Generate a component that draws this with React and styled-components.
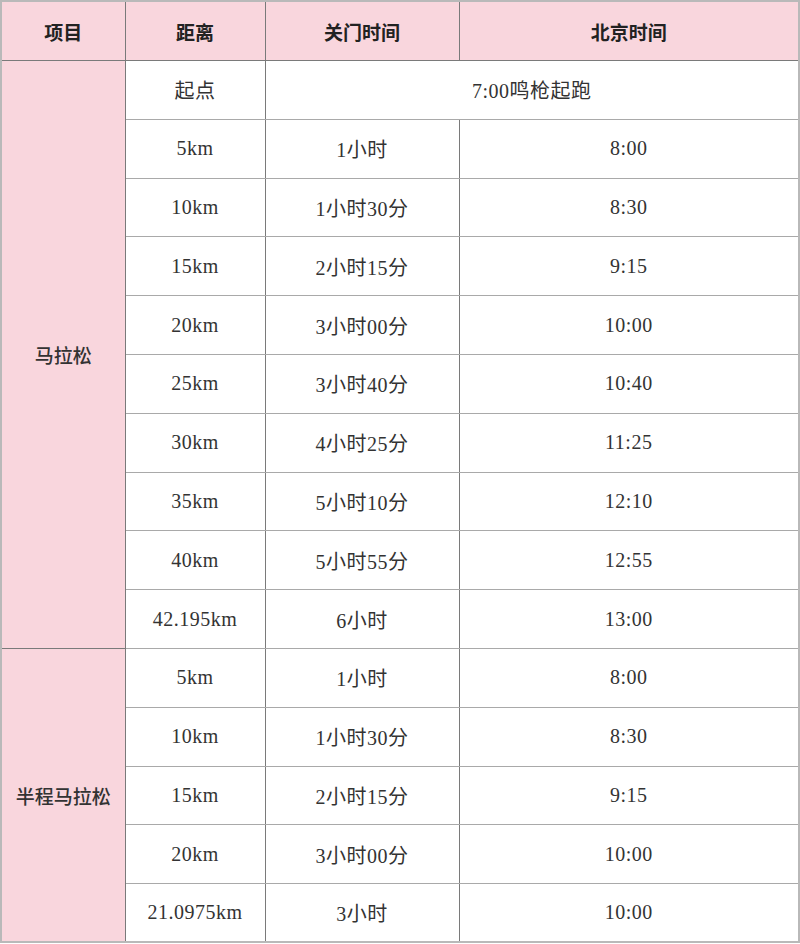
import React from 'react';
import styled, { createGlobalStyle } from 'styled-components';

const GlobalStyle = createGlobalStyle`
  html, body {
    margin: 0;
    padding: 0;
    background: #ffffff;
  }
`;

const Table = styled.table`
  width: 800px;
  border-collapse: collapse;
  table-layout: fixed;
  border: 2px solid #b9b9b9;
  font-family: "Liberation Serif", "Noto Sans CJK SC", serif;
  color: #333333;
`;

const HeadCell = styled.th`
  height: 58px;
  background: #f9d6dd;
  border: 1px solid #7a7a7a;
  border-top: 2px solid #b9b9b9;
  font-family: "Noto Sans CJK SC", "Noto Sans", sans-serif;
  font-size: 19px;
  font-weight: 700;
  color: #222222;
  text-align: center;
  padding: 0;

  &:first-child {
    border-left: 2px solid #b9b9b9;
  }
  &:last-child {
    border-right: 2px solid #b9b9b9;
  }
`;

const GroupCell = styled.td`
  background: #f9d6dd;
  border: 1px solid #7a7a7a;
  border-left: 2px solid #b9b9b9;
  border-bottom: ${({ $last }) => ($last ? '2px solid #b9b9b9' : '1px solid #7a7a7a')};
  font-family: "Noto Sans CJK SC", "Noto Sans", sans-serif;
  font-size: 19px;
  font-weight: 500;
  color: #333333;
  text-align: center;
  padding: 0;
`;

const Row = styled.tr`
  height: 58.8px;
`;

const Cell = styled.td`
  border-left: 1px solid #7a7a7a;
  border-right: ${({ $edge }) => ($edge ? '2px solid #b9b9b9' : '1px solid #7a7a7a')};
  border-top: 1px solid #a9a9a9;
  border-bottom: ${({ $bottom }) => ($bottom ? '2px solid #b9b9b9' : '1px solid #a9a9a9')};
  font-size: 20px;
  letter-spacing: 0.5px;
  text-align: center;
  padding: 0;
  white-space: nowrap;
`;

const marathon = [
  ['5km', '1小时', '8:00'],
  ['10km', '1小时30分', '8:30'],
  ['15km', '2小时15分', '9:15'],
  ['20km', '3小时00分', '10:00'],
  ['25km', '3小时40分', '10:40'],
  ['30km', '4小时25分', '11:25'],
  ['35km', '5小时10分', '12:10'],
  ['40km', '5小时55分', '12:55'],
  ['42.195km', '6小时', '13:00'],
];

const half = [
  ['5km', '1小时', '8:00'],
  ['10km', '1小时30分', '8:30'],
  ['15km', '2小时15分', '9:15'],
  ['20km', '3小时00分', '10:00'],
  ['21.0975km', '3小时', '10:00'],
];

const App = () => {
  return (
    <>
      <GlobalStyle />
      <Table>
        <colgroup>
          <col style={{ width: 124 }} />
          <col style={{ width: 140 }} />
          <col style={{ width: 194 }} />
          <col />
        </colgroup>
        <thead>
          <tr>
            <HeadCell>项目</HeadCell>
            <HeadCell>距离</HeadCell>
            <HeadCell>关门时间</HeadCell>
            <HeadCell>北京时间</HeadCell>
          </tr>
        </thead>
        <tbody>
          <Row>
            <GroupCell rowSpan={marathon.length + 1}>马拉松</GroupCell>
            <Cell>起点</Cell>
            <Cell colSpan={2} $edge>7:00鸣枪起跑</Cell>
          </Row>
          {marathon.map(([dist, close, time]) => (
            <Row key={'m' + dist}>
              <Cell>{dist}</Cell>
              <Cell>{close}</Cell>
              <Cell $edge>{time}</Cell>
            </Row>
          ))}
          {half.map(([dist, close, time], i) => {
            const last = i === half.length - 1;
            return (
              <Row key={'h' + dist}>
                {i === 0 && (
                  <GroupCell rowSpan={half.length} $last>
                    半程马拉松
                  </GroupCell>
                )}
                <Cell $bottom={last}>{dist}</Cell>
                <Cell $bottom={last}>{close}</Cell>
                <Cell $bottom={last} $edge>{time}</Cell>
              </Row>
            );
          })}
        </tbody>
      </Table>
    </>
  );
};

export default App;
